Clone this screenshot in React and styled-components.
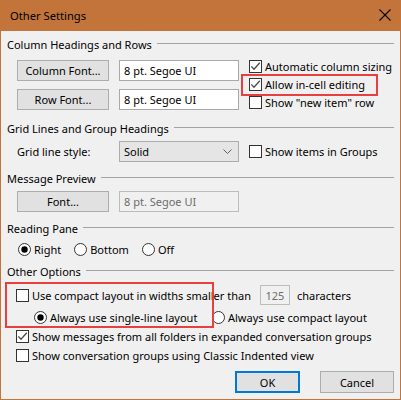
import React from "react";
import styled, { createGlobalStyle } from "styled-components";

const Global = createGlobalStyle`
  html, body { margin: 0; padding: 0; background: #ffffff; }
  body {
    font-family: "Noto Sans", "Open Sans", sans-serif;
    font-size: 11px;
    color: #000000;
  }
  * { box-sizing: border-box; }
`;

const Window = styled.div`
  width: 401px;
  height: 400px;
  border: 1px solid #c3743a;
  border-top: none;
  background: #f0f0f0;
  display: flex;
  flex-direction: column;
`;

const TitleBar = styled.div`
  height: 31px;
  margin: 0 -1px;
  background: #c3743a;
  display: flex;
  align-items: center;
  justify-content: space-between;
  padding: 0 10px 1px 10px;
  font-size: 11.2px;
`;

const CloseIcon = () => (
  <svg width="12" height="12" viewBox="0 0 12 12">
    <path d="M0.5 0.5 L11.5 11.5 M11.5 0.5 L0.5 11.5" stroke="#000" strokeWidth="1.1" />
  </svg>
);

const Body = styled.div`
  display: flex;
  flex-direction: column;
  padding: 5px 6px 0 6px;
`;

const Section = styled.div`
  display: flex;
  flex-direction: column;
  margin-top: ${(p) => p.$top || 0}px;
`;

const Header = styled.div`
  display: flex;
  align-items: center;
  height: 16px;
  white-space: nowrap;
  &::after {
    content: "";
    flex: 1;
    margin-left: 5px;
    border-top: 1px solid #a3a3a3;
    margin-top: -1px;
  }
`;

const Row = styled.div`
  display: flex;
  align-items: center;
  margin-top: ${(p) => p.$top || 0}px;
  padding-left: ${(p) => p.$indent || 0}px;
  height: ${(p) => p.$h || 16}px;
  white-space: nowrap;
`;

const TopRows = styled.div`
  display: flex;
  margin-top: 8px;
  padding-left: 10px;
`;

const FontGrid = styled.div`
  display: grid;
  grid-template-columns: 92px 120px;
  column-gap: 10px;
  row-gap: 7px;
`;

const CheckColumn = styled.div`
  display: flex;
  flex-direction: column;
  margin-left: 10px;
  margin-top: -3px;
`;

const Button = styled.button`
  width: ${(p) => p.$w || 92}px;
  height: ${(p) => p.$h || 21}px;
  background: #e1e1e1;
  border: ${(p) => (p.$default ? "2px solid #0078d7" : "1px solid #adadad")};
  font: inherit;
  color: #000;
  padding: 0;
  margin: 0;
`;

const TextBox = styled.div`
  width: ${(p) => p.$w || 120}px;
  height: ${(p) => p.$h || 21}px;
  background: ${(p) => (p.$disabled ? "#f0f0f0" : "#ffffff")};
  border: 1px solid ${(p) => (p.$disabled ? "#bcbcbc" : "#a9a9a9")};
  color: ${(p) => (p.$disabled ? "#6d6d6d" : "#000000")};
  display: flex;
  align-items: center;
  justify-content: ${(p) => (p.$center ? "center" : "flex-start")};
  padding-left: ${(p) => (p.$center ? 0 : 4)}px;
  margin-left: ${(p) => p.$ml || 0}px;
`;

const Select = styled.div`
  width: 120px;
  height: 21px;
  background: #e5e5e5;
  border: 1px solid #acacac;
  display: flex;
  align-items: center;
  justify-content: space-between;
  padding: 0 6px 0 4px;
`;

const Label = styled.span`
  display: inline-block;
  width: ${(p) => (p.$w ? `${p.$w}px` : "auto")};
  margin-left: ${(p) => p.$ml || 0}px;
`;

const CheckRow = styled.div`
  position: relative;
  display: flex;
  align-items: center;
  gap: 3px;
  height: ${(p) => p.$h || 18}px;
  margin-left: ${(p) => p.$ml || 0}px;
  white-space: nowrap;
`;

const Option = styled.div`
  display: flex;
  align-items: center;
  gap: ${(p) => p.$gap ?? 3}px;
  width: ${(p) => (p.$w ? `${p.$w}px` : "auto")};
  margin-right: ${(p) => p.$mr || 0}px;
`;

const Annotation = styled.div`
  position: absolute;
  top: ${(p) => p.$t}px;
  left: ${(p) => p.$l}px;
  width: ${(p) => p.$w}px;
  height: ${(p) => p.$h}px;
  border: 2px solid #e8403f;
  pointer-events: none;
`;

const Group = styled.div`
  position: relative;
  display: flex;
  flex-direction: column;
  margin-top: 6px;
`;

const Footer = styled.div`
  display: flex;
  justify-content: flex-end;
  gap: 20px;
  margin-top: 8px;
`;

const Checkbox = ({ checked }) => (
  <svg width="13" height="13" viewBox="0 0 13 13" style={{ flex: "none" }}>
    <rect x="0.5" y="0.5" width="12" height="12" fill="#ffffff" stroke="#333333" />
    {checked && (
      <path d="M2.3 6.4 L5 9.2 L10.8 2.8" fill="none" stroke="#4a4a4a" strokeWidth="1.3" />
    )}
  </svg>
);

const Radio = ({ checked }) => (
  <svg width="13" height="13" viewBox="0 0 13 13" style={{ flex: "none" }}>
    <circle cx="6.5" cy="6.5" r="6" fill="#ffffff" stroke="#333333" />
    {checked && <circle cx="6.5" cy="6.5" r="3.2" fill="#000000" />}
  </svg>
);

const Chevron = () => (
  <svg width="9" height="5" viewBox="0 0 9 5">
    <path d="M0.5 0.5 L4.5 4.5 L8.5 0.5" fill="none" stroke="#606060" strokeWidth="1" />
  </svg>
);

export default function App() {
  return (
    <>
      <Global />
      <Window>
        <TitleBar>
          <span>Other Settings</span>
          <CloseIcon />
        </TitleBar>
        <Body>
          <Section>
            <Header>Column Headings and Rows</Header>
            <TopRows>
              <FontGrid>
                <Button>Column Font...</Button>
                <TextBox>8 pt. Segoe UI</TextBox>
                <Button>Row Font...</Button>
                <TextBox>8 pt. Segoe UI</TextBox>
              </FontGrid>
              <CheckColumn>
                <CheckRow>
                  <Checkbox checked />
                  <span>Automatic column sizing</span>
                </CheckRow>
                <CheckRow>
                  <Checkbox checked />
                  <span>Allow in-cell editing</span>
                  <Annotation $t={-1} $l={-8} $w={137} $h={22} />
                </CheckRow>
                <CheckRow>
                  <Checkbox />
                  <span>Show "new item" row</span>
                </CheckRow>
              </CheckColumn>
            </TopRows>
          </Section>

          <Section $top={9}>
            <Header>Grid Lines and Group Headings</Header>
            <Row $top={5} $h={21} $indent={10}>
              <Label $w={102}>Grid line style:</Label>
              <Select>
                <span>Solid</span>
                <Chevron />
              </Select>
              <CheckRow $ml={10} $h={21}>
                <Checkbox />
                <span>Show items in Groups</span>
              </CheckRow>
            </Row>
          </Section>

          <Section $top={8}>
            <Header>Message Preview</Header>
            <Row $top={5} $h={21} $indent={10}>
              <Button>Font...</Button>
              <TextBox $disabled $ml={10}>8 pt. Segoe UI</TextBox>
            </Row>
          </Section>

          <Section $top={8}>
            <Header>Reading Pane</Header>
            <Row $top={5} $indent={11}>
              <Option $mr={13}>
                <Radio checked />
                <span>Right</span>
              </Option>
              <Option $mr={13}>
                <Radio />
                <span>Bottom</span>
              </Option>
              <Option>
                <Radio />
                <span>Off</span>
              </Option>
            </Row>
          </Section>

          <Section $top={6}>
            <Header>Other Options</Header>
            <Group>
              <Row $h={20} $indent={9}>
                <Option>
                  <Checkbox />
                  <span>Use compact layout in widths smaller than</span>
                </Option>
                <TextBox $disabled $w={30} $h={20} $ml={9} $center>125</TextBox>
                <Label $ml={7}>characters</Label>
              </Row>
              <Row $top={4} $indent={27}>
                <Option $w={178}>
                  <Radio checked />
                  <span>Always use single-line layout</span>
                </Option>
                <Option>
                  <Radio />
                  <span>Always use compact layout</span>
                </Option>
              </Row>
              <Annotation $t={-3} $l={-2} $w={209} $h={46} />
            </Group>
            <Row $top={3} $indent={9}>
              <Option>
                <Checkbox checked />
                <span>Show messages from all folders in expanded conversation groups</span>
              </Option>
            </Row>
            <Row $top={3} $indent={9}>
              <Option>
                <Checkbox />
                <span>Show conversation groups using Classic Indented view</span>
              </Option>
            </Row>
          </Section>

          <Footer>
            <Button $w={65} $h={22} $default>OK</Button>
            <Button $w={74} $h={22}>Cancel</Button>
          </Footer>
        </Body>
      </Window>
    </>
  );
}
